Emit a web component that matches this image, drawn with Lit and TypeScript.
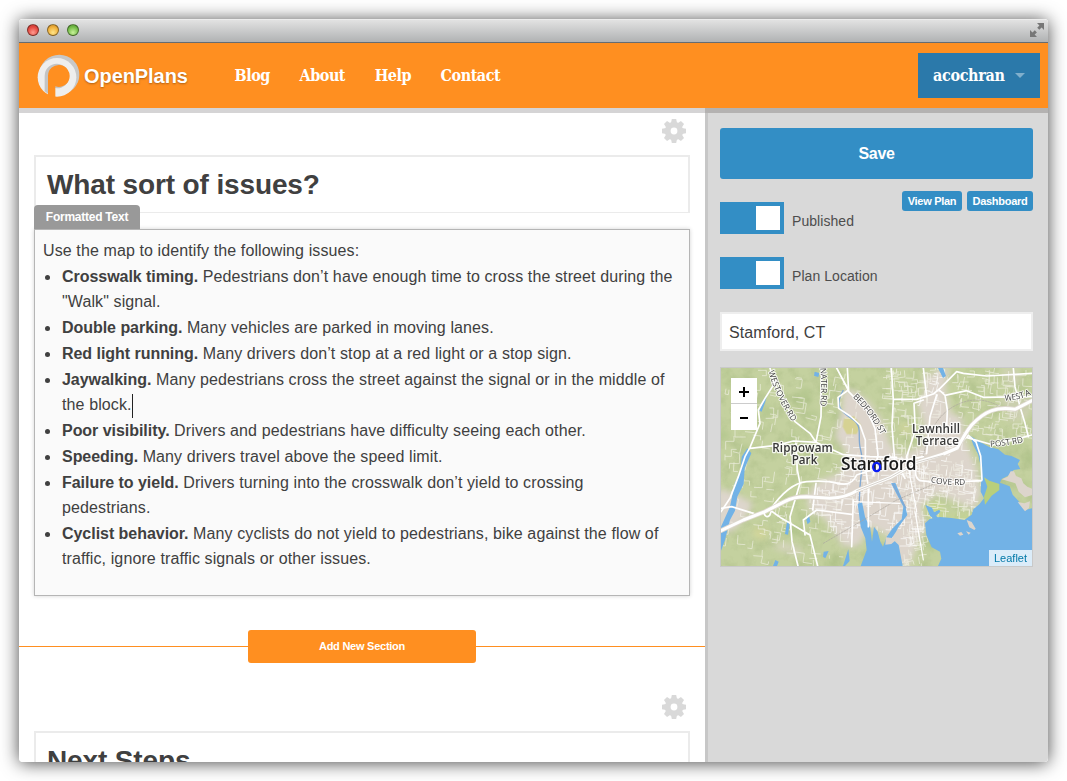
import { LitElement, html, svg, css } from "lit";
import { customElement, property } from "lit/decorators.js";

/* Deterministic pseudo-random source, so the street texture is stable. */
function rng(seed: number) {
  let s = seed;
  return () => ((s = (s * 16807) % 2147483647) / 2147483647);
}

function streets(seed: number, count: number, x0: number, y0: number, w: number, h: number, len: number, tilt: number) {
  const r = rng(seed);
  let d = "";
  for (let i = 0; i < count; i++) {
    const x = x0 + r() * w;
    const y = y0 + r() * h;
    let a = tilt + (r() < 0.5 ? 0 : Math.PI / 2) + (r() - 0.5) * 0.25;
    d += `M${x.toFixed(0)} ${y.toFixed(0)}`;
    const n = 1 + Math.floor(r() * 3);
    for (let k = 0; k < n; k++) {
      const l = len * (0.4 + r());
      d += `l${(Math.cos(a) * l).toFixed(0)} ${(Math.sin(a) * l).toFixed(0)}`;
      a += (r() < 0.5 ? 1 : -1) * (Math.PI / 2);
    }
  }
  return d;
}

function blots(seed: number, count: number) {
  const r = rng(seed);
  return Array.from({ length: count }, () => ({
    x: 33 + r() * 933,
    y: 24 + r() * 594,
    rx: 8 + r() * 30,
    ry: 6 + r() * 18,
  }));
}

const URBAN =
  "M400 85L440 95 480 130 520 190 540 250 570 290 640 250 640 190 620 130 655 75 680 24 720 24 712 60 700 110 725 160 755 170 770 250 800 320 815 400 795 450 680 400 640 440 650 500 620 560 600 618 560 618 540 530 480 500 445 560 400 560 340 470 300 460 290 410 320 365 390 340 410 280 375 230 395 150Z";

@customElement("plan-map")
class PlanMap extends LitElement {
  static styles = css`
    :host { display: block; position: relative; box-sizing: border-box; width: 313px; height: 200px; border: 1px solid #c9c9c9; }
    .canvas { display: block; width: 311px; height: 198px; }
    .label { font-family: "Open Sans", "Noto Sans", sans-serif; fill: #2c2c2c; stroke: #fff; stroke-opacity: .8; stroke-width: 8px; paint-order: stroke; stroke-linejoin: round; }
    .place { font-size: 35px; font-weight: 600; fill: #383838; }
    .city { font-size: 52px; font-weight: 600; fill: #1b1b1b; }
    .road { font-size: 25px; font-weight: 500; fill: #444; stroke-width: 6px; }
    .zoom { position: absolute; left: 10px; top: 10px; width: 26px; height: 52px; display: flex; flex-direction: column; background: #fff; }
    .zoom span { box-sizing: border-box; height: 25px; padding-top: 3px; display: flex; align-items: center; justify-content: center; }
    .zoom span + span { height: 27px; padding-top: 2px; border-top: 1px solid #ccc; }
    .credit { position: absolute; right: 0; bottom: 0; width: 43px; height: 16px; text-align: center; background: rgba(255,255,255,.75); color: #0078a8; font: 11px/16px "Liberation Sans", Arial, sans-serif; }
  `;

  render() {
    return html`
      <svg class="canvas" viewBox="33 24 933 594" preserveAspectRatio="none">
        <defs>
          <filter id="soft" x="-20%" y="-20%" width="140%" height="140%"><feGaussianBlur stdDeviation="9" /></filter>
          <filter id="relief" x="0" y="0" width="100%" height="100%">
            <feTurbulence type="fractalNoise" baseFrequency="0.03" numOctaves="4" seed="4" />
            <feColorMatrix values="0 0 0 0 .38  0 0 0 0 .48  0 0 0 0 .22  2.2 0 0 0 -.95" />
          </filter>
          <clipPath id="town"><path d="${URBAN}" /></clipPath>
          <path id="westover" d="M176 34Q196 110 250 190" />
          <path id="newfield" d="M331 24Q336 90 330 145" />
          <path id="bedford" d="M428 112Q480 160 516 230" />
          <path id="west" d="M884 122Q930 122 970 100" />
          <path id="post" d="M841 260Q890 258 944 246" />
          <path id="cove" d="M662 367Q710 378 770 374" />
        </defs>
        <rect x="33" y="24" width="933" height="594" fill="#c4d19f" />
        <g filter="url(#soft)" fill="#a9c083" opacity=".55">
          ${blots(71, 46).map((b) => svg`<ellipse cx=${b.x} cy=${b.y} rx=${b.rx} ry=${b.ry} />`)}
        </g>
        <rect x="33" y="24" width="933" height="594" filter="url(#relief)" opacity=".45" />
        <g filter="url(#soft)" fill="#ddd5cc">
          <path d="${URBAN}" />
          <path d="M20 385L65 395 130 430 110 470 60 520 20 500Z" />
          <path d="M870 24h50l20 50-40 10zM870 110h90v60l-60 20z" opacity=".5" />
          <path d="M640 40l60 10 20 100-70 30z" />
          <path d="M180 560l40-15 60 20-20 25z" opacity=".6" />
        </g>
        <path d="M402 175L432 168 453 195 440 222 410 222 398 200Z" fill="#d6d293" />
        <path d="M570 195l25-8 3 28-20 8zM130 500l45 8-10 30-35-5z" fill="#d6d79a" opacity=".8" filter="url(#soft)" />
        <path d="M640 432L690 430 710 470 800 462 790 478 660 480Z" fill="#c6d58f" filter="url(#soft)" />
        <g fill="none" stroke="#f4f2e8" stroke-width="2.4" stroke-linejoin="round" opacity=".75">
          <path d="${streets(11, 150, 45, 30, 400, 580, 24, 0.12)}" />
          <path d="${streets(29, 75, 500, 24, 180, 240, 24, 0)}" />
          <path d="${streets(51, 90, 720, 24, 240, 210, 24, 0.1)}" />
          <path d="${streets(83, 90, 580, 300, 220, 160, 22, 0.08)}" />
          <path d="${streets(17, 34, 580, 470, 60, 140, 20, -0.1)}" />
        </g>
        <g fill="none" stroke="#fff" stroke-width="2.6" clip-path="url(#town)" opacity=".75">
          <path d="${streets(97, 150, 290, 260, 360, 290, 28, 0.05)}" />
          <path d="${streets(37, 60, 620, 40, 180, 400, 24, 0.15)}" />
        </g>

        <g fill="#72b2e6">
          <path d="M780 227L812 247 838 261 865 268 885 284 905 288 930 300 923 312 931 327 911 330 899 345 875 357 870 368 899 379 908 404 925 422 938 440 945 450 966 445V618H684L694 596 690 575 665 562 649 525 645 490 660 476 690 471 725 474 763 480 785 464 790 448 808 433 822 415 812 395 815 330 804 283 790 255Z" />
          <path d="M443 432L456 426 465 470 481 505 486 545 492 500 503 515 511 545 519 560 530 530 548 505 575 478 580 440 543 370 556 368 586 440 592 465 566 500 558 515 545 535 566 555 578 618H452L470 570 466 535 452 500Z" />
          <path d="M112 265L95 290 91 335 74 370 60 440 33 500V572L45 540 60 480 75 452 82 410 101 372 104 325 124 280Z" />
          <path d="M171 105L160 120 148 152 155 155 166 125ZM684 24L699 54 708 48 699 24ZM314 35l14 4-3 12-13-4zM232 480l7 14-5 30-9-2zM297 465l4 20-8 8-4-12zM341 575l15-2-10 22-7-5zM415 568l4 35-14 15h-6zM196 600l10 5-5 13h-12z" />
          <path d="M646 435l20 8 6 14 16-8 3 6-13 12 10 10-12 4-16-14z" />
        </g>
        <path d="M822 352L838 362 868 372 868 390 845 407 825 434 822 410 832 380Z" fill="#b9cf7c" />
        <g fill="#ddd5cc">
          <path d="M966 405L945 412 926 395 916 370 875 358 893 350 902 334 912 334 918 348 934 355 940 370 952 380 966 386ZM923 426l20 4 17-6-3 20-12 10-8-10zM770 480l15 6 12 20-4 4-15-8zM742 520l12-4 6 8-10 3zM768 514l14 4-6 6zM528 532l18 2 14-14 10 10-26 22-18 2z" />
        </g>
        <path d="M400 90C370 140 395 155 428 178S440 230 452 270 448 350 448 430M548 370L588 445" fill="none" stroke="#82a9d3" stroke-width="4" />
        <g fill="none" stroke-linejoin="round" stroke-linecap="round">
          <path d="M640 290Q660 180 730 140T870 140M340 550L460 480 560 420 700 360" stroke="#aaa69f" stroke-width="2" stroke-dasharray="5 4" />
          <g stroke="#fff" stroke-width="5">
            <path d="M200 60L165 115 145 150 150 190 120 262 105 290 85 350 60 415 33 455M120 265L200 256 250 243 320 247" />
            <path d="M180 24L192 68 255 185 300 220 318 247M335 24L333 170 318 247 400 284 480 290 560 292" />
            <path d="M258 250L262 330 270 370 240 470 246 545 264 618M180 450L215 475 300 525 323 618M285 525L280 480 320 450 425 463M318 370L308 450M430 420L425 560" />
            <path d="M33 445L65 440 130 460M180 450Q235 370 290 365T385 370 440 345L540 310 640 290" />
            <path d="M380 24L415 90 384 112 386 145 420 168 450 195 466 240 466 320 475 380 475 500M412 24L416 95 470 150 495 205 504 285 490 345" />
            <path d="M544 24L550 120 546 200 554 300 585 355M550 118H620L670 102 690 85 740 35 760 40 830 48 966 40M640 120L612 130 616 210 590 290 600 345M650 110L640 24" />
            <path d="M688 90L705 106 770 92 820 112 966 110M705 106L712 150 710 200M930 140L945 190 955 230M680 105L660 170 650 280M910 24L915 80 930 140" />
            <path d="M620 320Q610 350 630 362L690 368 815 362M750 250L775 226 798 246 812 288 816 360M760 230L850 255 966 225" />
            <path d="M430 425L570 430M600 350L620 455M615 455L640 600" stroke-width="3.5" />
          </g>
          <path d="M33 512L100 480 165 455 225 424Q250 410 290 410L360 415Q410 412 440 392L540 353 620 307 700 282 742 264Q765 220 785 195 815 163 845 152T915 148L966 122" stroke="#ded8cf" stroke-width="14" />
          <path d="M33 512L100 480 165 455 225 424Q250 410 290 410L360 415Q410 412 440 392L540 353 620 307 700 282 742 264Q765 220 785 195 815 163 845 152T915 148L966 122" stroke="#fff" stroke-width="9" />
          <path d="M162 460q6 16 17 6l4-10" stroke="#fff" stroke-width="5" />
          <path d="M440 392L540 353 620 307 700 286" stroke="#c3bcb2" stroke-width="2" />
        </g>
        <g class="label road">
          <text><textPath href="#westover" textLength="168">WESTOVER RD</textPath></text>
          <text><textPath href="#newfield" textLength="114">NATER RD</textPath></text>
          <text><textPath href="#bedford" textLength="142">BEDFORD ST</textPath></text>
          <text><textPath href="#west" textLength="82">WEST A</textPath></text>
          <text><textPath href="#post" textLength="100">POST RD</textPath></text>
          <text><textPath href="#cove" textLength="105">COVE RD</textPath></text>
        </g>
        <g class="label place">
          <text x="187" y="275" textLength="181">Rippowam</text>
          <text x="245" y="312" textLength="77">Park</text>
          <text x="606" y="218" textLength="144">Lawnhill</text>
          <text x="617" y="255" textLength="130">Terrace</text>
        </g>
        <text class="label city" x="393" y="331" textLength="227">Stamford</text>
        <ellipse cx="500" cy="321" rx="10.5" ry="12.5" fill="none" stroke="#0a1cf5" stroke-width="7" />
      </svg>
      <div class="zoom">
        <span><svg width="10" height="10"><path d="M0 5H10M5 0V10" stroke="#000" stroke-width="2" /></svg></span>
        <span><svg width="8" height="10"><path d="M0 5H8" stroke="#000" stroke-width="2" /></svg></span>
      </div>
      <div class="credit">Leaflet</div>
    `;
  }
}

@customElement("gear-icon")
class GearIcon extends LitElement {
  static styles = css`
    :host { display: block; width: 24px; height: 24px; }
    .gear { display: block; }
  `;
  render() {
    return html`<svg class="gear" width="24" height="24" viewBox="-12 -12 24 24">
      <g fill="#d9d9d9">
        ${[0, 45, 90, 135].map(
          (a) => svg`<path d="M-3 -8L-2.2 -12H2.2L3 -8V8L2.2 12H-2.2L-3 8Z" transform="rotate(${a})" />`
        )}
        <circle r="9.2" />
      </g>
      <circle r="3.4" fill="#fff" />
    </svg>`;
  }
}

@customElement("switch-row")
class SwitchRow extends LitElement {
  @property() label = "";
  static styles = css`
    :host { display: flex; height: 32px; gap: 8px; }
    .track { box-sizing: border-box; width: 64px; height: 32px; padding: 4px; background: #338ec5; display: flex; justify-content: flex-end; }
    .thumb { width: 24px; height: 24px; background: #fff; }
    .text { font-size: 14px; line-height: 38px; color: #4d4d4d; letter-spacing: .06px; }
  `;
  render() {
    return html`<div class="track"><div class="thumb"></div></div><span class="text">${this.label}</span>`;
  }
}

const ISSUES: [string, string, boolean?][] = [
  ["Crosswalk timing.", "Pedestrians don’t have enough time to cross the street during the\n\"Walk\" signal."],
  ["Double parking.", "Many vehicles are parked in moving lanes."],
  ["Red light running.", "Many drivers don’t stop at a red light or a stop sign."],
  ["Jaywalking.", "Many pedestrians cross the street against the signal or in the middle of\nthe block.", true],
  ["Poor visibility.", "Drivers and pedestrians have difficulty seeing each other."],
  ["Speeding.", "Many drivers travel above the speed limit."],
  ["Failure to yield.", "Drivers turning into the crosswalk don’t yield to crossing\npedestrians."],
  ["Cyclist behavior.", "Many cyclists do not yield to pedestrians, bike against the flow of\ntraffic, ignore traffic signals or other issues."],
];

@customElement("app-root")
class AppRoot extends LitElement {
  static styles = css`
    :host { display: block; box-sizing: border-box; width: 1067px; height: 781px; padding: 19px; overflow: hidden; background: #fff; font-family: "Liberation Sans", Arial, sans-serif; color: #404040; }
    .window { width: 1029px; height: 743px; border-radius: 4px; box-shadow: 0 1px 18px rgba(0,0,0,.72); }
    .frame { height: 100%; display: flex; flex-direction: column; border-radius: 4px; overflow: hidden; background: #fff; }
    .titlebar { box-sizing: border-box; height: 24px; padding: 0 3px 0 8px; display: flex; align-items: center; justify-content: space-between; background: linear-gradient(#e2e2e2, #b0b2b3); border-top: 1px solid #ececec; border-bottom: 1px solid #676c70; flex: none; }
    .lights { display: flex; gap: 8px; padding-bottom: 2px; }
    .light { box-sizing: border-box; width: 12px; height: 12px; border-radius: 50%; border: 1px solid rgba(0,0,0,.42); }
    .red { background: radial-gradient(circle at 50% 75%, #ff9b90, #e4483f 60%, #b83630); }
    .amber { background: radial-gradient(circle at 50% 75%, #ffe58a, #f0b03a 60%, #c08322); }
    .green { background: radial-gradient(circle at 50% 75%, #c8f29a, #76bd48 60%, #4d8f2c); }
    .expand { padding-bottom: 2px; }
    .header { flex: none; box-sizing: border-box; height: 65px; padding: 0 8px 0 18px; background: #ff8f20; display: flex; align-items: center; }
    .logo { display: block; margin-right: 4px; }
    .brand { width: 150.500px; font-size: 20px; font-weight: bold; letter-spacing: -.07px; color: #fff; text-shadow: 0 1px 2px rgba(80,40,0,.45); line-height: 66px; }
    .nav { flex: 1; display: flex; gap: 29.600px; padding-bottom: 1px; }
    .nav, .user { font-family: "DejaVu Serif Condensed", "DejaVu Serif", serif; font-stretch: condensed; font-weight: bold; font-size: 16px; letter-spacing: -.48px; color: #fff; }
    .user { box-sizing: border-box; width: 122px; height: 45px; padding: 0 15px 1px; background: #2b79aa; display: flex; align-items: center; justify-content: space-between; letter-spacing: -.35px; }
    .arrow { margin-top: 1px; border: 5px solid transparent; border-top-color: #80afcc; border-bottom: 0; }
    .body { flex: 1; min-height: 0; display: flex; }
    .main { box-sizing: border-box; width: 686px; padding: 6px 15px 0; border-top: 5px solid #d5d4d5; overflow: hidden; }
    .tools { display: flex; justify-content: flex-end; padding-right: 4px; }
    .heading { box-sizing: border-box; height: 58px; margin-top: 12px; padding: 0 11px; border: 2px solid #ebebeb; border-bottom-width: 1px; font-size: 28px; font-weight: bold; line-height: 55px; letter-spacing: -.13px; white-space: nowrap; }
    .tab { position: relative; width: 106px; height: 24px; margin-top: -8px; background: #999; border-radius: 4px 4px 0 0; color: #fff; font-size: 12px; font-weight: bold; line-height: 25px; text-align: center; letter-spacing: -.25px; }
    .editor { box-sizing: border-box; height: 367px; padding: 8px; border: 1px solid #b5b5b5; box-shadow: 0 0 4px rgba(0,0,0,.18); background: #fafafa; font-size: 16px; line-height: 25px; letter-spacing: .11px; }
    .lead, .list { margin: 0 0 1px; }
    .list { padding: 0 0 0 19px; list-style: none; }
    .item { margin-bottom: 1px; white-space: pre-line; }
    .item::before { content: ""; float: left; width: 5px; height: 5px; margin: 11px 0 0 -17px; border-radius: 50%; background: #404040; }
    .term { letter-spacing: -.04px; }
    .caret { display: inline-block; width: 1px; height: 24px; margin: -4px 0; vertical-align: middle; background: #222; }
    .divider { display: flex; align-items: center; height: 33px; margin: 34px -15px 32px; }
    .rule { flex: 1; height: 1px; background: #ff8f20; }
    .add { width: 228px; height: 33px; border-radius: 3px; background: #ff8f20; color: #fff; font-size: 11px; font-weight: bold; line-height: 33px; text-align: center; letter-spacing: -.25px; }
    .side { box-sizing: border-box; flex: 1; padding: 15px 15px 0; background: linear-gradient(90deg, #c7c7c7 3px, #d9d9d9 3px); border-top: 5px solid #b4b2b1; }
    .save { height: 51px; border-radius: 3px; background: #338ec5; color: #fff; font-size: 16px; font-weight: bold; line-height: 51px; text-align: center; letter-spacing: -.3px; }
    .row { display: flex; justify-content: space-between; padding-top: 12px; height: 43px; margin-bottom: 23px; }
    .row switch-row { padding-top: 11px; }
    .links { display: flex; gap: 5px; }
    .chip { height: 20px; border-radius: 3px; background: #338ec5; color: #fff; font-size: 11px; font-weight: bold; line-height: 21px; text-align: center; letter-spacing: -.28px; white-space: nowrap; }
    .view { width: 60px; }
    .dash { width: 66px; }
    .input { box-sizing: border-box; height: 39px; margin: 23px 0 16px; padding: 0 7px; border: 2px solid #eee; background: #fff; font-size: 16px; line-height: 37px; letter-spacing: .1px; }
  `;

  render() {
    return html`
      <div class="window"><div class="frame">
        <div class="titlebar">
          <div class="lights"><i class="light red"></i><i class="light amber"></i><i class="light green"></i></div>
          <svg class="expand" width="16" height="16" viewBox="0 0 16 16" fill="#777">
            <path d="M8 1h7v7l-2.4-2.4-2.3 2.2-2.1-2.1 2.2-2.3zM1 8v7h7l-2.4-2.4 2.3-2.2-2.1-2.1-2.3 2.2z" />
          </svg>
        </div>
        <div class="header">
          <svg class="logo" width="43" height="44" viewBox="110 164 129 132">
            <circle cx="177" cy="226" r="60" fill="#c8c8c8" />
            <circle cx="170" cy="234" r="58" fill="#eeeeee" />
            <path d="M133 229a36 36 0 0 1 72 0a33 33 0 0 1 -40 37h-22v17l-10 -7z" fill="#c4c4c4" />
            <path d="M143 229a32.500 33 0 1 1 22 32V300H143z" fill="#ff8f20" />
          </svg>
          <div class="brand">OpenPlans</div>
          <div class="nav"><span>Blog</span><span>About</span><span>Help</span><span>Contact</span></div>
          <div class="user"><span>acochran</span><i class="arrow"></i></div>
        </div>
        <div class="body">
          <div class="main">
            <div class="tools"><gear-icon></gear-icon></div>
            <div class="heading">What sort of issues?</div>
            <div class="tab">Formatted Text</div>
            <div class="editor">
              <p class="lead">Use the map to identify the following issues:</p>
              <ul class="list">
                ${ISSUES.map(([t, d, caret]) => html`<li class="item"><b class="term">${t}</b> ${d}${caret ? html`<i class="caret"></i>` : ""}</li>`)}
              </ul>
            </div>
            <div class="divider"><div class="rule"></div><div class="add">Add New Section</div><div class="rule"></div></div>
            <div class="tools"><gear-icon></gear-icon></div>
            <div class="heading">Next Steps</div>
          </div>
          <div class="side">
            <div class="save">Save</div>
            <div class="row">
              <switch-row label="Published"></switch-row>
              <div class="links"><div class="chip view">View Plan</div><div class="chip dash">Dashboard</div></div>
            </div>
            <switch-row label="Plan Location"></switch-row>
            <div class="input">Stamford, CT</div>
            <plan-map></plan-map>
          </div>
        </div>
      </div></div>
    `;
  }
}
